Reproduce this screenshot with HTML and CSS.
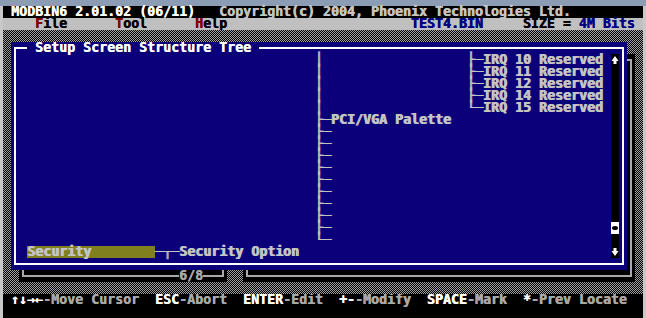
FILE: index.html
```html
<!DOCTYPE html>
<html lang="en">
<head>
  <meta charset="UTF-8" />
  <title>MODBIN6</title>
  <link rel="stylesheet" href="styles.css">
</head>
<body>
  <div class="topbar"></div>
  <div class="frame">
    <div class="screen">
      <div class="line title"> MODBIN6 2.01.02 (06/11)   <span class="dim">Copyright(c) 2004, Phoenix Technologies Ltd.</span></div>
      <div class="line menu">    <span class="hot">F</span>ile      <span class="hot">T</span>ool      <span class="hot">H</span>elp                       <span class="file">TEST4.BIN</span>     SIZE = <span class="file">4M Bits</span></div>

      <div class="desktop">
        <div class="win back back-a"><span class="win-label">6/8</span></div>
        <div class="win back back-b"></div>

        <div class="win panel">
          <span class="win-title"> Setup Screen Structure Tree </span>
<pre class="tree">                                     │                  ├─IRQ 10 Reserved
                                     │                  ├─IRQ 11 Reserved
                                     │                  ├─IRQ 12 Reserved
                                     │                  ├─IRQ 14 Reserved
                                     │                  └─IRQ 15 Reserved
                                     ├─PCI/VGA Palette
                                     ├─
                                     ├─
                                     ├─
                                     ├─
                                     ├─
                                     ├─
                                     ├─
                                     ├─
                                     ├─
                                     └─
 <span class="sel">Security        </span>─┬─Security Option</pre>
          <div class="scrollbar">
            <span class="sb-cell">
              <svg width="8" height="12" viewBox="0 0 8 12"><path d="M4 2 L7.5 7 H5.5 V10 H2.5 V7 H0.5 Z" fill="#fff"/></svg>
            </span>
            <span class="sb-track"></span>
            <span class="sb-thumb"></span>
            <span class="sb-cell"></span>
            <span class="sb-cell">
              <svg width="8" height="12" viewBox="0 0 8 12"><path d="M2.5 2 H5.5 V5 H7.5 L4 10 L0.5 5 H2.5 Z" fill="#fff"/></svg>
            </span>
          </div>
        </div>
      </div>

      <div class="line status"> <span class="key">↑↓→←</span>-Move Cursor  <span class="key">ESC</span>-Abort  <span class="key">ENTER</span>-Edit  <span class="key">+-</span>-Modify  <span class="key">SPACE</span>-Mark  <span class="key">*</span>-Prev Locate</div>
    </div>
  </div>
</body>
</html>
```

FILE: styles.css
```css
:root {
  --blue: #0b0079;
  --gray: #a8a8a8;
  --light: #c4c4c4;
}

body {
  margin: 0;
  background: #c8c8c8;
  font-family: "DejaVu Sans Mono", monospace;
  font-weight: bold;
  font-size: 13.29px;
  line-height: 12px;
}

.topbar {
  height: 6px;
  background: #8c9cb4;
}

.frame {
  display: flex;
  padding: 0 3px;
}

.screen {
  width: 640px;
  height: 312px;
  background: #000;
  text-shadow: 0.6px 0 0 currentColor;
}

.line {
  height: 12px;
  white-space: pre;
}

.title {
  color: #fff;
}

.title .dim {
  color: var(--light);
}

.menu {
  background: #c0c0c0;
  color: #000;
}

.hot {
  color: #800000;
}

.file {
  color: #000080;
}

.desktop {
  position: relative;
  height: 264px;
  background: repeating-conic-gradient(#a0a0a0 0 25%, #000 0 50%) 0 0 / 2px 2px;
}

.win {
  position: absolute;
  box-sizing: border-box;
}

.win::before {
  content: "";
  position: absolute;
  inset: 5px 3px;
  border: 2px solid;
  pointer-events: none;
}

.back {
  top: 24px;
  height: 228px;
  background: #000;
  color: var(--gray);
}

.back-a {
  left: 16px;
  width: 208px;
}

.back-b {
  left: 240px;
  width: 392px;
}

.win-label {
  position: absolute;
  left: 160px;
  bottom: 0;
  height: 12px;
  background: #000;
}

.panel {
  left: 8px;
  top: 12px;
  width: 616px;
  height: 228px;
  padding: 12px 8px;
  display: flex;
  background: var(--blue);
  color: #fff;
}

.win-title {
  position: absolute;
  top: 0;
  left: 16px;
  height: 12px;
  white-space: pre;
  background: var(--blue);
}

.tree {
  flex: 1;
  margin: 0;
  font: inherit;
  white-space: pre;
  color: var(--light);
  text-shadow: 1px 0 0 currentColor;
}

.sel {
  display: inline-block;
  height: 12px;
  vertical-align: top;
  background: #80801c;
}

.scrollbar {
  width: 8px;
  display: flex;
  flex-direction: column;
  background: #000;
}

.sb-cell {
  height: 12px;
}

.sb-cell svg {
  display: block;
}

.sb-track {
  flex: 1;
}

.sb-thumb {
  height: 12px;
  position: relative;
  background: #fff;
}

.sb-thumb::after {
  content: "";
  position: absolute;
  left: 1px;
  top: 4px;
  width: 6px;
  height: 4px;
  border-radius: 50%;
  background: #000;
}

.status {
  color: var(--gray);
}

.status .key {
  color: #fff;
}
```
